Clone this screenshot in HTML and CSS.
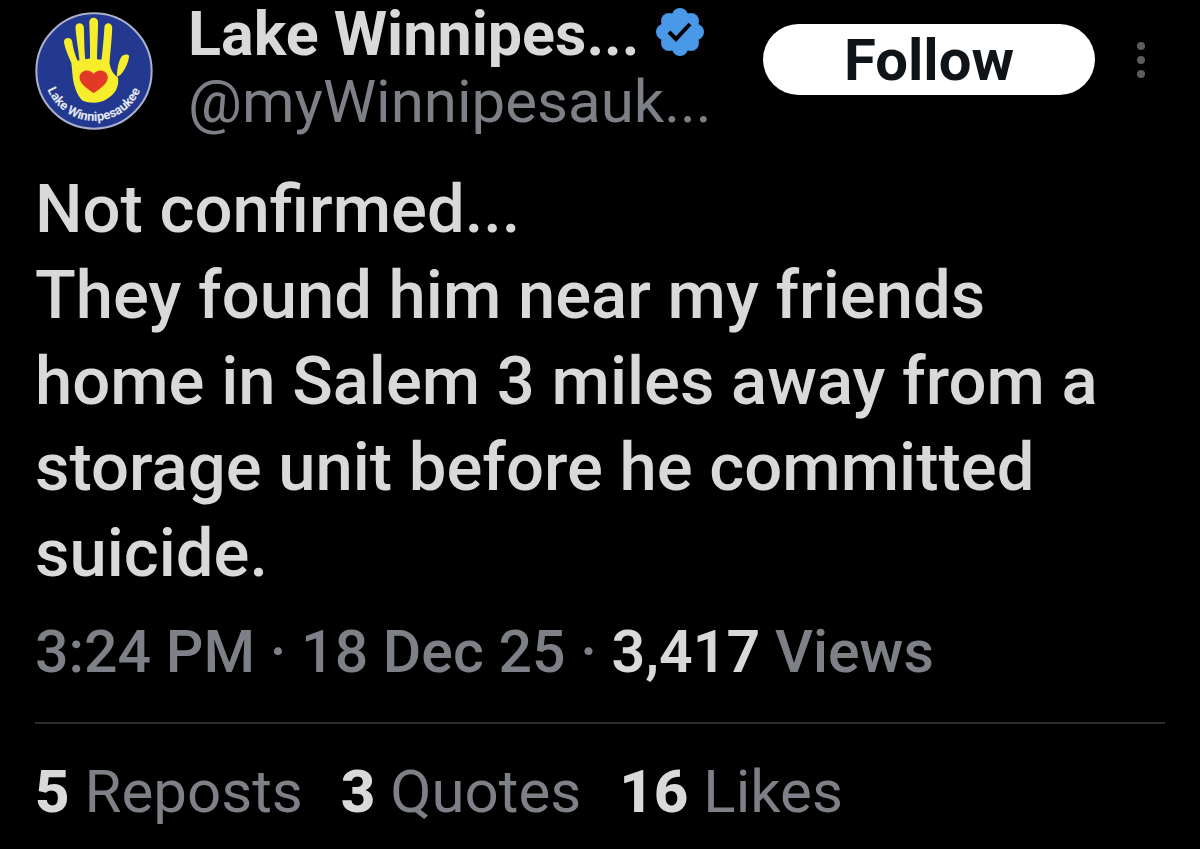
FILE: index.html
```html
<!DOCTYPE html>
<html lang="en">
<head>
    <meta charset="UTF-8">
    <meta name="viewport" content="width=device-width, initial-scale=1">
    <title>Lake Winnipesaukee</title>
    <link rel="stylesheet" href="styles.css">
</head>
<body>
    <article class="post">
        <header class="post-header">
            <svg class="avatar" viewBox="45 38 350 350" role="img" aria-label="Lake Winnipesaukee">
                <circle cx="220" cy="213" r="171" fill="#22398f" stroke="#aab0cc" stroke-width="6"/>
                <!--hand-->
                <path fill="#f6ee2c" d="M153 190 C146 172 134 148 131 128 C130 112 152 112 155 124 C158 145 163 165 171 182 L177 182 C174 150 167 115 165 84 C165 68 188 67 190 84 C191 115 191 150 194 178 L208 176 C209 140 207 100 206 68 C207 51 231 51 232 68 C232 105 229 145 229 178 L242 180 C246 150 249 115 251 82 C253 67 273 68 274 84 C273 120 268 160 266 190 C271 215 280 224 291 232 C296 262 280 283 258 296 C240 309 208 310 186 301 C168 285 158 250 156 222 Z"/>
                <path fill="#f6ee2c" d="M288 230 C288 210 292 185 302 170 C310 163 324 162 324 170 C321 192 310 212 299 224 Z"/>
                <path fill="#e23a26" d="M219 279 C204 268 176 252 177 231 C180 208 209 206 219 222 C229 206 258 208 261 231 C262 252 234 268 219 279 Z"/>
                <path id="arc" fill="none" d="M82 268 A149 149 0 0 0 361 261"/>
                <text class="avatar-text"><textPath href="#arc">Lake Winnipesaukee</textPath></text>
            </svg>
            <div class="author">
                <div class="name-row">
                    <a class="name" href="#">Lake Winnipes...</a>
                    <svg class="badge" viewBox="0 0 48 48" role="img" aria-label="Verified">
                        <g fill="#4a99e9">
                            <circle cx="24" cy="24" r="20"/>
                            <circle cx="24" cy="8" r="8"/>
                            <circle cx="35" cy="13" r="8"/>
                            <circle cx="40" cy="24" r="8"/>
                            <circle cx="35" cy="35" r="8"/>
                            <circle cx="24" cy="40" r="8"/>
                            <circle cx="13" cy="35" r="8"/>
                            <circle cx="8" cy="24" r="8"/>
                            <circle cx="13" cy="13" r="8"/>
                        </g>
                        <path fill="none" stroke="#000" stroke-width="4" d="M13 24 L20 31 L34 16"/>
                    </svg>
                </div>
                <a class="handle" href="#">@myWinnipesauk...</a>
            </div>
            <button class="follow" type="button">Follow</button>
            <button class="more" type="button" aria-label="More">
                <svg class="dots" viewBox="0 0 8 36">
                    <circle cx="4" cy="4" r="4"/>
                    <circle cx="4" cy="18" r="4"/>
                    <circle cx="4" cy="32" r="4"/>
                </svg>
            </button>
        </header>
        <p class="text">Not confirmed...<br>They found him near my friends home in Salem 3 miles away from a storage unit before he committed suicide.</p>
        <p class="meta">3:24 PM · 18 Dec 25 · <b class="views">3,417</b> Views</p>
        <ul class="stats">
            <li><b>5</b> Reposts</li>
            <li><b>3</b> Quotes</li>
            <li><b>16</b> Likes</li>
        </ul>
    </article>
</body>
</html>
```
FILE: styles.css
```css
*{
    margin: 0;
    padding: 0;
    box-sizing: border-box;
}
body{
    background: #000;
    color: #d9d9d9;
    font-family: Roboto, "Liberation Sans", sans-serif;
    font-size: 60px;
    line-height: 68px;
}
a{
    color: inherit;
    text-decoration: none;
}
.post{
    padding: 0 35px;
}
.post-header{
    display: flex;
    align-items: flex-start;
}
.avatar{
    flex: none;
    width: 118px;
    height: 118px;
    margin-top: 12px;
}
.avatar-text{
    fill: #e4e7f2;
    font-size: 38px;
    font-weight: 700;
}
.author{
    flex: 1;
    min-width: 0;
    padding-left: 35px;
    white-space: nowrap;
}
.name-row{
    display: flex;
    align-items: flex-start;
    gap: 17px;
}
.name{
    font-size: 61px;
    font-weight: 700;
}
.badge{
    flex: none;
    width: 48px;
    height: 48px;
    margin-top: 8px;
}
.handle{
    display: block;
    color: #7d8187;
}
.follow{
    flex: none;
    width: 332px;
    height: 71px;
    margin-top: 24px;
    border: none;
    border-radius: 36px;
    background: #fff;
    color: #0f1419;
    font-family: inherit;
    font-size: 58px;
    font-weight: 700;
    cursor: pointer;
}
.more{
    flex: none;
    display: flex;
    justify-content: center;
    width: 48px;
    margin: 42px 0 0 22px;
    border: none;
    background: none;
    cursor: pointer;
}
.dots{
    width: 8px;
    height: 36px;
    fill: #5b5c60;
}
.text{
    margin-top: 30px;
    font-size: 67px;
    font-weight: 500;
    line-height: 86px;
}
.meta{
    margin-top: 22px;
    padding-bottom: 36px;
    border-bottom: 2px solid #2b2c2e;
    color: #7d8187;
    font-size: 59px;
    font-weight: 500;
}
.views{
    color: #d9d9d9;
    font-weight: 600;
}
.stats{
    display: flex;
    gap: 38px;
    margin-top: 34px;
    color: #7d8187;
    list-style: none;
}
.stats b{
    color: #d9d9d9;
    font-weight: 800;
}
```
